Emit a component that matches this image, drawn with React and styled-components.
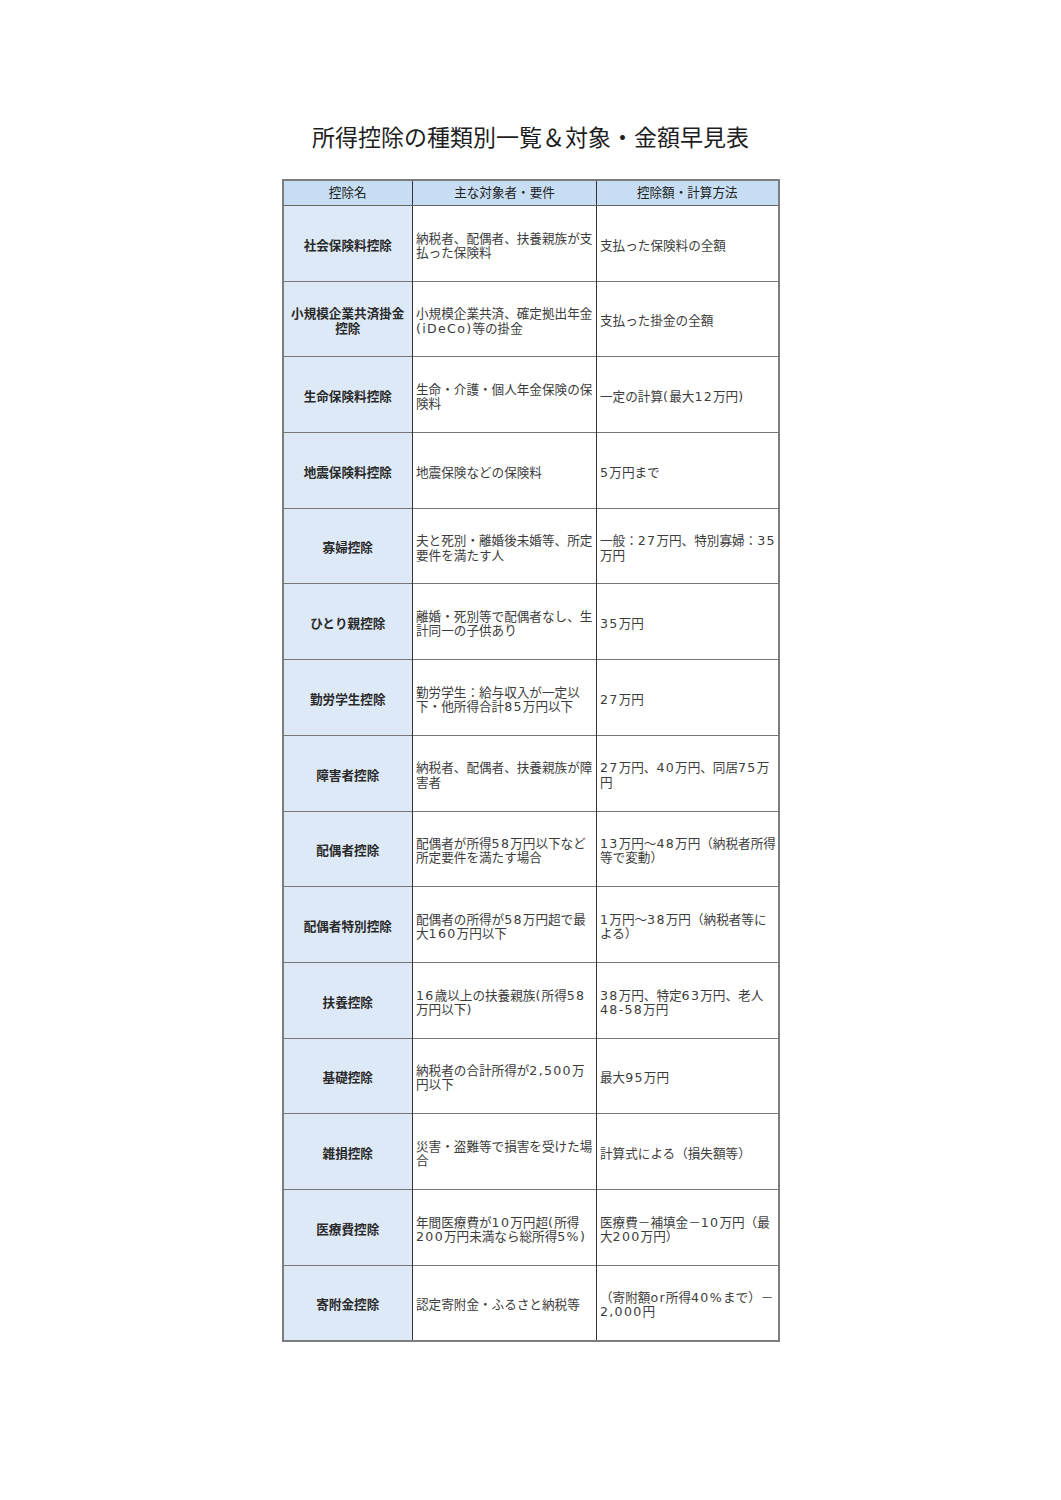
import React from 'react';
import styled, { createGlobalStyle } from 'styled-components';

const GlobalStyle = createGlobalStyle`
  html, body {
    margin: 0;
    padding: 0;
    background: #ffffff;
  }
  body {
    font-family: "DejaVu Sans", "Noto Sans CJK JP", sans-serif;
    color: #333;
  }
`;

const rows = [
  ['社会保険料控除', '納税者、配偶者、扶養親族が支払った保険料', '支払った保険料の全額'],
  ['小規模企業共済掛金控除', '小規模企業共済、確定拠出年金(iDeCo)等の掛金', '支払った掛金の全額'],
  ['生命保険料控除', '生命・介護・個人年金保険の保険料', '一定の計算(最大12万円)'],
  ['地震保険料控除', '地震保険などの保険料', '5万円まで'],
  ['寡婦控除', '夫と死別・離婚後未婚等、所定要件を満たす人', '一般：27万円、特別寡婦：35万円'],
  ['ひとり親控除', '離婚・死別等で配偶者なし、生計同一の子供あり', '35万円'],
  ['勤労学生控除', '勤労学生：給与収入が一定以下・他所得合計85万円以下', '27万円'],
  ['障害者控除', '納税者、配偶者、扶養親族が障害者', '27万円、40万円、同居75万円'],
  ['配偶者控除', '配偶者が所得58万円以下など所定要件を満たす場合', '13万円～48万円（納税者所得等で変動）'],
  ['配偶者特別控除', '配偶者の所得が58万円超で最大160万円以下', '1万円～38万円（納税者等による）'],
  ['扶養控除', '16歳以上の扶養親族(所得58万円以下)', '38万円、特定63万円、老人48-58万円'],
  ['基礎控除', '納税者の合計所得が2,500万円以下', '最大95万円'],
  ['雑損控除', '災害・盗難等で損害を受けた場合', '計算式による（損失額等）'],
  ['医療費控除', '年間医療費が10万円超(所得200万円未満なら総所得5%)', '医療費－補填金－10万円（最大200万円）'],
  ['寄附金控除', '認定寄附金・ふるさと納税等', '（寄附額or所得40%まで）－2,000円'],
];

// half-width runs are set wider in the original, so they get their own span
const Mixed = ({ text }) =>
  text.split(/([\x21-\x7E]+)/).map((part, i) =>
    i % 2 === 1 ? <Latin key={i}>{part}</Latin> : part
  );

export default function App() {
  return (
    <>
      <GlobalStyle />
      <Page>
        <Title>所得控除の種類別一覧＆対象・金額早見表</Title>
        <Table>
          <colgroup>
            <col style={{ width: 130 }} />
            <col style={{ width: 184 }} />
            <col style={{ width: 182 }} />
          </colgroup>
          <thead>
            <tr>
              <HeadCell>控除名</HeadCell>
              <HeadCell>主な対象者・要件</HeadCell>
              <HeadCell>控除額・計算方法</HeadCell>
            </tr>
          </thead>
          <tbody>
            {rows.map(([name, target, amount]) => (
              <Row key={name}>
                <NameCell>{name}</NameCell>
                <BodyCell><Mixed text={target} /></BodyCell>
                <BodyCell><Mixed text={amount} /></BodyCell>
              </Row>
            ))}
          </tbody>
        </Table>
      </Page>
    </>
  );
}

const Page = styled.div`
  display: flex;
  flex-direction: column;
  align-items: center;
  padding-top: 121px;
  min-height: 1500px;
  box-sizing: border-box;
`;

const Title = styled.h1`
  margin: 0 0 27px;
  font-family: "Noto Sans CJK JP", sans-serif;
  font-size: 23px;
  line-height: 31px;
  font-weight: 400;
  color: #1e1e1e;
`;

const Table = styled.table`
  width: 496px;
  table-layout: fixed;
  border-collapse: collapse;
  border: 2px solid #7d7d7d;
  font-size: 12.6px;
  line-height: 14.2px;
`;

const HeadCell = styled.th`
  height: 24px;
  padding: 0;
  background: #c6ddf3;
  font-weight: 400;
  color: #222;
  text-align: center;
  vertical-align: middle;
  border-left: 1px solid #333;
  border-bottom: 1px solid #666;
`;

const Row = styled.tr`
  height: 75.7px;
  & + & td {
    border-top: 1px solid #777;
  }
`;

const BodyCell = styled.td`
  padding: 5px 0 0 3px;
  vertical-align: middle;
  text-align: left;
  color: #3c3c3c;
  border-left: 1px solid #333;
`;

const NameCell = styled(BodyCell)`
  background: #dde9f6;
  text-align: center;
  font-weight: 700;
  color: #2a2a2a;
  padding: 5px 4px 0;
`;

const Latin = styled.span`
  letter-spacing: 1.3px;
`;
